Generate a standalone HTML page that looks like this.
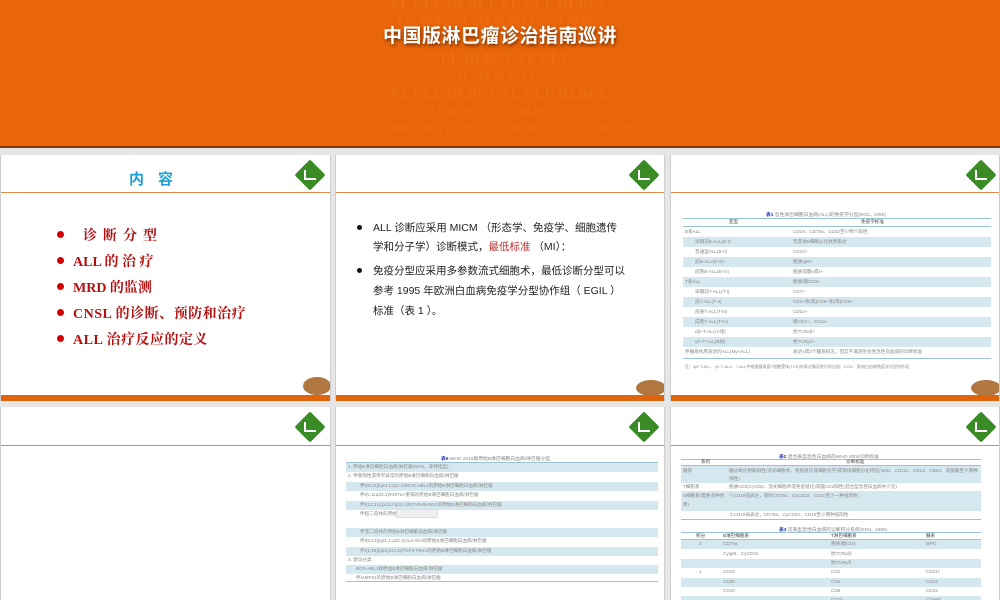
<!DOCTYPE html>
<html><head><meta charset="utf-8"><style>
*{margin:0;padding:0;box-sizing:border-box}
body{width:1000px;height:600px;background:#e6e6e6;position:relative;overflow:hidden;font-family:"Liberation Sans","Noto Sans CJK SC",sans-serif}
.ban{position:absolute;left:0;top:0;width:1000px;height:148px;background:#e8650a;border-bottom:2px solid #8a3a06;overflow:hidden}
.wm{position:absolute;left:0;width:1000px;text-align:center;color:#ec6c10;font-family:"Liberation Serif",serif;font-weight:bold;white-space:nowrap}
.title{position:absolute;left:0;top:21px;width:1000px;text-align:center;color:#fff;font-size:19px;font-weight:bold;font-family:"Liberation Sans","Noto Sans CJK SC",sans-serif;text-shadow:1px 2px 3px #7a3000;letter-spacing:0.5px}
.s{position:absolute;background:#fff;overflow:hidden;border-left:1px solid #ccc;border-right:1px solid #ccc}
.hl{position:absolute;left:0;right:0;height:1px;background:#e08a4a}
.bb{position:absolute;left:0;right:0;height:6px;background:#e0640c}
.logo{position:absolute;width:22px;height:22px;background:#3a8a26;transform:rotate(45deg);border-radius:2px}
.logo:after{content:"";position:absolute;left:5px;top:6px;width:10px;height:8px;border-left:2px solid #fff;border-bottom:2px solid #fff;transform:rotate(-45deg)}
.t{position:absolute;font-size:4.6px;color:#888;white-space:nowrap;line-height:1}
.r{position:absolute;height:10px}
.sh{background:#d6e8ef}
.ln{position:absolute;height:1px;background:#9cc3d3}
.red{color:#b51010;font-family:"Liberation Serif","Noto Serif CJK SC",serif;font-weight:bold;font-size:14px;position:absolute;white-space:nowrap}
.dot{position:absolute;width:7px;height:7px;border-radius:50%;background:#c00}
.p{position:absolute;font-size:10.5px;color:#222;white-space:nowrap}
.bd{position:absolute;width:5px;height:5px;border-radius:50%;background:#111}
.tt{position:absolute;font-size:4.8px;color:#888;white-space:nowrap}
.tt b{color:#2233aa}
</style></head><body>
<div class="ban">
<div class="wm" style="top:-3px;font-size:15px">FL CLL DLBCL FL CLL DLBCL</div>
<div class="wm" style="top:15px;font-size:10px">CLL DLBCL FL CLL DLBCL FL CLL DLBCL</div>
<div class="wm" style="top:50px;font-size:15px">CLL DLBCL FL CLL</div>
<div class="wm" style="top:72px;font-size:10px">FL CLL DLBCL FL</div>
<div class="wm" style="top:87px;font-size:15px">FL CLL DLBCL FL CLL DLBCL</div>
<div class="wm" style="top:107px;font-size:10px">FL CLL DLBCL FL CLL DLBCL FL CLL</div>
<div class="wm" style="top:124px;font-size:10px">CLL DLBCL FL CLL DLBCL FL DLBCL FL CLL DLBCL FL</div>
<div class="title">中国版淋巴瘤诊治指南巡讲</div>
</div>

<!-- slide 1 -->
<div class="s" style="left:0;top:155px;width:331px;height:246px">
<div style="position:absolute;left:128px;top:13px;color:#1aa0d8;font-size:15px;font-weight:bold;letter-spacing:14px">内容</div>
<div class="logo" style="left:298px;top:9px"></div>
<div class="hl" style="top:37px"></div>
<div class="dot" style="left:56px;top:76px"></div><div class="red" style="left:82px;top:70px;letter-spacing:6px">诊断分型</div>
<div class="dot" style="left:56px;top:102px"></div><div class="red" style="left:72px;top:96px">ALL 的 治 疗</div>
<div class="dot" style="left:56px;top:128px"></div><div class="red" style="left:72px;top:122px">MRD 的监测</div>
<div class="dot" style="left:56px;top:154px"></div><div class="red" style="left:72px;top:148px;letter-spacing:0.5px">CNSL 的诊断、预防和治疗</div>
<div class="dot" style="left:56px;top:180px"></div><div class="red" style="left:72px;top:174px;letter-spacing:0.5px">ALL 治疗反应的定义</div>
<div style="position:absolute;left:302px;top:222px;width:28px;height:18px;border-radius:50%;background:#b07840"></div>
<div class="bb" style="top:240px"></div>
</div>

<!-- slide 2 -->
<div class="s" style="left:335px;top:155px;width:330px;height:246px">
<div class="logo" style="left:297px;top:9px"></div>
<div class="hl" style="top:37px"></div>
<div class="bd" style="left:21px;top:70px"></div>
<div class="p" style="left:37px;top:65px">ALL 诊断应采用 MICM （形态学、免疫学、细胞遗传</div>
<div class="p" style="left:37px;top:84px">学和分子学）诊断模式，<span style="color:#c03030">最低标准</span> （MI）：</div>
<div class="bd" style="left:21px;top:113px"></div>
<div class="p" style="left:37px;top:108px">免疫分型应采用多参数流式细胞术，最低诊断分型可以</div>
<div class="p" style="left:37px;top:128px">参考 1995 年欧洲白血病免疫学分型协作组（ EGIL ）</div>
<div class="p" style="left:37px;top:148px">标准（表 1 ）。</div>
<div style="position:absolute;left:300px;top:225px;width:30px;height:16px;border-radius:50%;background:#b07840"></div>
<div class="bb" style="top:240px"></div>
</div>

<!-- slide 3 -->
<div class="s" style="left:670px;top:155px;width:330px;height:246px">
<div class="logo" style="left:299px;top:9px"></div>
<div class="hl" style="top:37px"></div>
<div class="tt" style="left:95px;top:56px"><b>表1</b> 急性淋巴细胞白血病(ALL)的免疫学分型(EGIL, 1995)</div>
<div class="ln" style="left:12px;width:308px;top:63px"></div>
<div class="t" style="left:58px;top:65px;color:#444">亚型</div><div class="t" style="left:190px;top:65px;color:#444">免疫学标准</div>
<div class="ln" style="left:12px;width:308px;top:71px"></div>
<div class="r sh" style="left:12px;width:308px;top:82px"></div>
<div class="r sh" style="left:12px;width:308px;top:102px"></div>
<div class="r sh" style="left:12px;width:308px;top:122px"></div>
<div class="r sh" style="left:12px;width:308px;top:142px"></div>
<div class="r sh" style="left:12px;width:308px;top:162px"></div>
<div class="r sh" style="left:12px;width:308px;top:182px"></div>
<div class="ln" style="left:12px;width:308px;top:203px"></div>
<div class="t" style="left:14px;top:75px">B系ALL</div><div class="t" style="left:122px;top:75px">CD19、CD79a、CD22至少两个阳性</div>
<div class="t" style="left:24px;top:85px">早期前B-ALL(B-I)</div><div class="t" style="left:122px;top:85px">无其他B细胞分化抗原表达</div>
<div class="t" style="left:24px;top:95px">普通型ALL(B-II)</div><div class="t" style="left:122px;top:95px">CD10+</div>
<div class="t" style="left:24px;top:105px">前B-ALL(B-III)</div><div class="t" style="left:122px;top:105px">胞质IgM+</div>
<div class="t" style="left:24px;top:115px">成熟B-ALL(B-IV)</div><div class="t" style="left:122px;top:115px">胞质或膜κ或λ+</div>
<div class="t" style="left:14px;top:125px">T系ALL</div><div class="t" style="left:122px;top:125px">胞质/膜CD3+</div>
<div class="t" style="left:24px;top:135px">早期前T-ALL(T-I)</div><div class="t" style="left:122px;top:135px">CD7+</div>
<div class="t" style="left:24px;top:145px">前T-ALL(T-II)</div><div class="t" style="left:122px;top:145px">CD2+和(或)CD5+和(或)CD8+</div>
<div class="t" style="left:24px;top:155px">皮质T-ALL(T-III)</div><div class="t" style="left:122px;top:155px">CD1a+</div>
<div class="t" style="left:24px;top:165px">成熟T-ALL(T-IV)</div><div class="t" style="left:122px;top:165px">膜CD3+，CD1a-</div>
<div class="t" style="left:24px;top:175px">αβ+T-ALL(A组)</div><div class="t" style="left:122px;top:175px">抗TCRαβ+</div>
<div class="t" style="left:24px;top:185px">γδ+T-ALL(B组)</div><div class="t" style="left:122px;top:185px">抗TCRγδ+</div>
<div class="t" style="left:14px;top:195px">伴髓系抗原表达的ALL(My+ALL)</div><div class="t" style="left:122px;top:195px">表达1或2个髓系标志，但又不满足杂合性急性白血病的诊断标准</div>
<div class="t" style="left:14px;top:210px;font-size:4px">注：αβ+T-ALL、γδ+T-ALL：T-ALL中根据膜表面T细胞受体(TCR)的表达情况进行的分组；EGIL：欧洲白血病免疫学分型协作组</div>
<div style="position:absolute;left:300px;top:225px;width:30px;height:16px;border-radius:50%;background:#b07840"></div>
<div class="bb" style="top:240px"></div>
</div>

<!-- slide 4 -->
<div class="s" style="left:0;top:407px;width:331px;height:193px">
<div class="logo" style="left:298px;top:9px"></div>
<div class="hl" style="top:38px"></div>
</div>

<!-- slide 5 -->
<div class="s" style="left:335px;top:407px;width:330px;height:193px">
<div class="logo" style="left:297px;top:9px"></div>
<div class="hl" style="top:38px"></div>
<div class="tt" style="left:105px;top:48px"><b>表5</b> WHO 2016版原始B淋巴细胞白血病/淋巴瘤分型</div>
<div class="ln" style="left:10px;width:312px;top:55px"></div>
<div class="r sh" style="left:10px;width:312px;top:56px;height:9px"></div>
<div class="r sh" style="left:10px;width:312px;top:75px;height:9px"></div>
<div class="r sh" style="left:10px;width:312px;top:94px;height:9px"></div>
<div class="r sh" style="left:10px;width:312px;top:121px;height:9px"></div>
<div class="r sh" style="left:10px;width:312px;top:140px;height:9px"></div>
<div class="r sh" style="left:10px;width:312px;top:158px;height:9px"></div>
<div class="ln" style="left:10px;width:312px;top:174px"></div>
<div class="t" style="left:12px;top:58px">1. 原始B淋巴细胞白血病/淋巴瘤(NOS，非特指型)</div>
<div class="t" style="left:12px;top:67px">2. 伴重现性遗传学异常的原始B淋巴细胞白血病/淋巴瘤</div>
<div class="t" style="left:24px;top:77px">伴t(9;22)(q34.1;q11.2)/BCR-ABL1的原始B淋巴细胞白血病/淋巴瘤</div>
<div class="t" style="left:24px;top:86px">伴t(v;11q23.3)/KMT2A重排的原始B淋巴细胞白血病/淋巴瘤</div>
<div class="t" style="left:24px;top:96px">伴t(12;21)(p13.2;q22.1)/ETV6-RUNX1的原始B淋巴细胞白血病/淋巴瘤</div>
<div class="t" style="left:24px;top:105px">伴超二倍体的原始</div>
<div style="position:absolute;left:60px;top:102px;width:42px;height:9px;background:#f0f0f0;border:1px solid #ddd"></div>
<div class="t" style="left:24px;top:123px">伴亚二倍体的原始B淋巴细胞白血病/淋巴瘤</div>
<div class="t" style="left:24px;top:132px">伴t(5;14)(q31.1;q32.3)/IL3-IGH的原始B淋巴细胞白血病/淋巴瘤</div>
<div class="t" style="left:24px;top:142px">伴t(1;19)(q23;p13.3)/TCF3-PBX1的原始B淋巴细胞白血病/淋巴瘤</div>
<div class="t" style="left:12px;top:151px">3. 建议分类</div>
<div class="t" style="left:20px;top:160px">BCR-ABL1样原始B淋巴细胞白血病/淋巴瘤</div>
<div class="t" style="left:20px;top:169px">伴iAMP21的原始B淋巴细胞白血病/淋巴瘤</div>
</div>

<!-- slide 6 -->
<div class="s" style="left:670px;top:407px;width:330px;height:193px">
<div class="logo" style="left:299px;top:9px"></div>
<div class="hl" style="top:38px"></div>
<div class="tt" style="left:108px;top:46px"><b>表2</b> 混合表型急性白血病的WHO 2008诊断标准</div>
<div class="ln" style="left:10px;width:300px;top:52px"></div>
<div class="t" style="left:30px;top:53px;color:#444">系列</div><div class="t" style="left:175px;top:53px;color:#444">诊断标准</div>
<div class="ln" style="left:10px;width:300px;top:58px"></div>
<div class="r sh" style="left:10px;width:300px;top:59px;height:17px"></div>
<div class="r sh" style="left:10px;width:300px;top:84px;height:20px"></div>
<div class="ln" style="left:10px;width:300px;top:112px"></div>
<div class="t" style="left:12px;top:62px">髓系</div><div class="t" style="left:58px;top:62px">髓过氧化物酶阳性(流式细胞术、免疫组化或细胞化学)或单核细胞分化特征(NSE、CD11c、CD14、CD64、溶菌酶至少两种</div>
<div class="t" style="left:58px;top:70px">阳性)</div>
<div class="t" style="left:12px;top:78px">T细胞系</div><div class="t" style="left:58px;top:78px">胞质CD3(CyCD3，流式细胞术或免疫组化)或膜CD3阳性(混合型急性白血病中少见)</div>
<div class="t" style="left:12px;top:87px">B细胞系(需要多种抗</div><div class="t" style="left:58px;top:87px">①CD19强表达，同时CD79a、CyCD22、CD10至少一种强阳性；</div>
<div class="t" style="left:12px;top:96px">原)</div>
<div class="t" style="left:58px;top:106px">②CD19弱表达，CD79a、CyCD22、CD10至少两种强阳性</div>
<div class="tt" style="left:108px;top:119px"><b>表3</b> 双表型急性白血病的诊断积分系统(EGIL, 1995)</div>
<div class="ln" style="left:10px;width:300px;top:125px"></div>
<div class="t" style="left:25px;top:127px;color:#444">积分</div><div class="t" style="left:52px;top:127px;color:#444">B淋巴细胞系</div><div class="t" style="left:160px;top:127px;color:#444">T淋巴细胞系</div><div class="t" style="left:255px;top:127px;color:#444">髓系</div>
<div class="ln" style="left:10px;width:300px;top:132px"></div>
<div class="r sh" style="left:10px;width:300px;top:133px;height:9px"></div>
<div class="r sh" style="left:10px;width:300px;top:152px;height:9px"></div>
<div class="r sh" style="left:10px;width:300px;top:171px;height:9px"></div>
<div class="r sh" style="left:10px;width:300px;top:189px;height:9px"></div>
<div class="t" style="left:28px;top:135px">2</div><div class="t" style="left:52px;top:135px">CD79a</div><div class="t" style="left:160px;top:135px">胞质/膜CD3</div><div class="t" style="left:255px;top:135px">MPO</div>
<div class="t" style="left:52px;top:145px">CyIgM、CyCD22</div><div class="t" style="left:160px;top:145px">抗TCRα/β</div>
<div class="t" style="left:160px;top:154px">抗TCRγ/δ</div>
<div class="t" style="left:28px;top:163px">1</div><div class="t" style="left:52px;top:163px">CD19</div><div class="t" style="left:160px;top:163px">CD2</div><div class="t" style="left:255px;top:163px">CD117</div>
<div class="t" style="left:52px;top:173px">CD20</div><div class="t" style="left:160px;top:173px">CD5</div><div class="t" style="left:255px;top:173px">CD13</div>
<div class="t" style="left:52px;top:182px">CD10</div><div class="t" style="left:160px;top:182px">CD8</div><div class="t" style="left:255px;top:182px">CD33</div>
<div class="t" style="left:160px;top:191px">CD10</div><div class="t" style="left:255px;top:191px">CDw65</div>
</div>
</body></html>
